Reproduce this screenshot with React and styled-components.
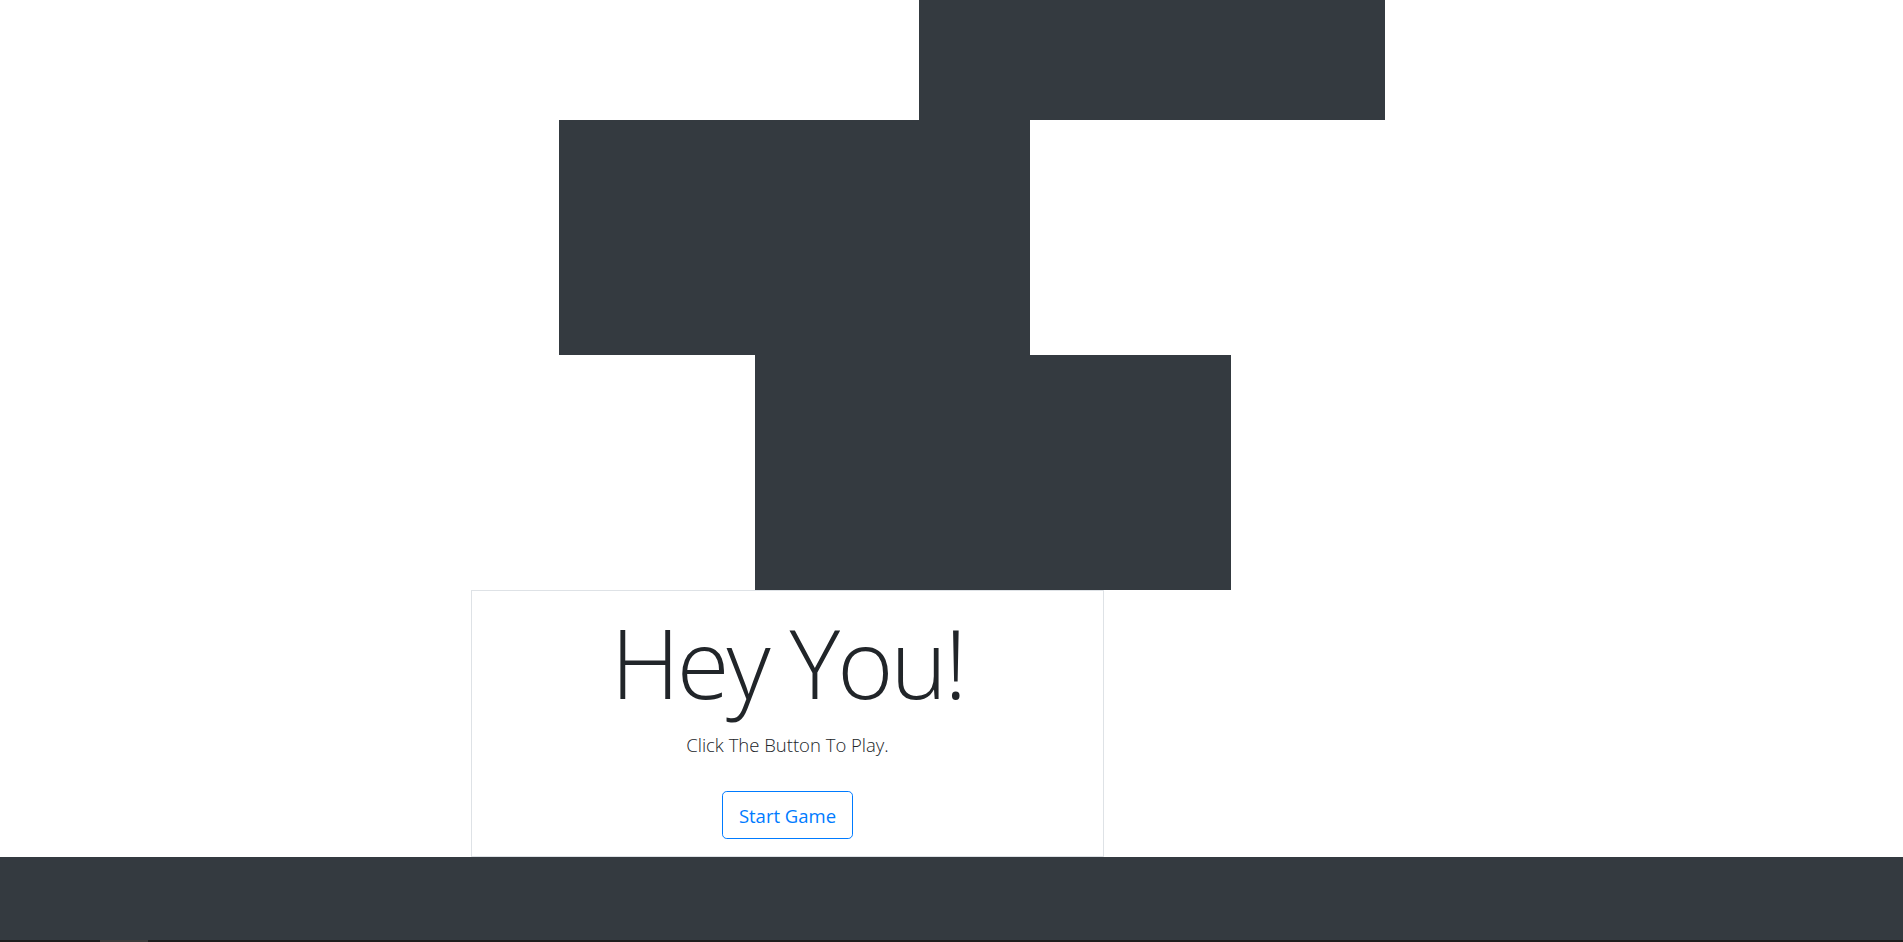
import styled, { createGlobalStyle } from 'styled-components';

const GlobalStyle = createGlobalStyle`
  html, body {
    margin: 0;
    padding: 0;
    background: #fff;
    font-family: "Open Sans", "Liberation Sans", sans-serif;
    color: #212529;
  }
`;

const pieces = [
  { left: 919, width: 466, height: 120 },
  { left: 559, width: 471, height: 235 },
  { left: 755, width: 476, height: 235 },
];

function App() {
  return (
    <Page>
      <GlobalStyle />
      <Board>
        {pieces.map((p, i) => (
          <Block key={i} $left={p.left} $width={p.width} $height={p.height} />
        ))}
        <Card>
          <Title>Hey You!</Title>
          <Lead>Click The Button To Play.</Lead>
          <StartButton>Start Game</StartButton>
        </Card>
      </Board>
      <Footer>
        <FooterStrip>
          <StripTab />
        </FooterStrip>
      </Footer>
    </Page>
  );
}

export default App;

const Page = styled.div`
  display: flex;
  flex-direction: column;
  height: 942px;
  overflow: hidden;
`;

const Board = styled.div`
  display: flex;
  flex-direction: column;
  flex: 1;
`;

const Block = styled.div`
  flex-shrink: 0;
  margin-left: ${p => p.$left}px;
  width: ${p => p.$width}px;
  height: ${p => p.$height}px;
  background-color: #343a40;
`;

const Card = styled.div`
  flex-shrink: 0;
  margin-left: 471px;
  width: 633px;
  height: 267px;
  box-sizing: border-box;
  border: 1px solid #dee2e6;
  display: flex;
  flex-direction: column;
  align-items: center;
  padding-top: 13px;
`;

const Title = styled.h1`
  flex-shrink: 0;
  margin: 0;
  font-size: 96px;
  font-weight: 300;
  line-height: 115px;
  letter-spacing: -3px;
  color: #212529;
`;

const Lead = styled.p`
  flex-shrink: 0;
  margin: 11px 0 0;
  font-size: 18.5px;
  font-weight: 300;
  line-height: 30px;
  color: #212529;
`;

const StartButton = styled.button`
  flex-shrink: 0;
  margin-top: 31px;
  width: 131px;
  height: 48px;
  box-sizing: border-box;
  padding: 0 12px;
  white-space: nowrap;
  font-family: "Open Sans", "Liberation Sans", sans-serif;
  font-size: 18.5px;
  color: #007bff;
  background: transparent;
  border: 1px solid #007bff;
  border-radius: 4.8px;
  cursor: pointer;

  &:hover {
    color: #fff;
    background: #007bff;
  }
`;

const Footer = styled.footer`
  flex-shrink: 0;
  height: 85px;
  background-color: #343a40;
  display: flex;
  flex-direction: column;
  justify-content: flex-end;
`;

const FooterStrip = styled.div`
  height: 2px;
  background-color: #1e1e1e;
  padding-left: 100px;
`;

const StripTab = styled.div`
  width: 48px;
  height: 2px;
  background-color: #3c3c3c;
`;
